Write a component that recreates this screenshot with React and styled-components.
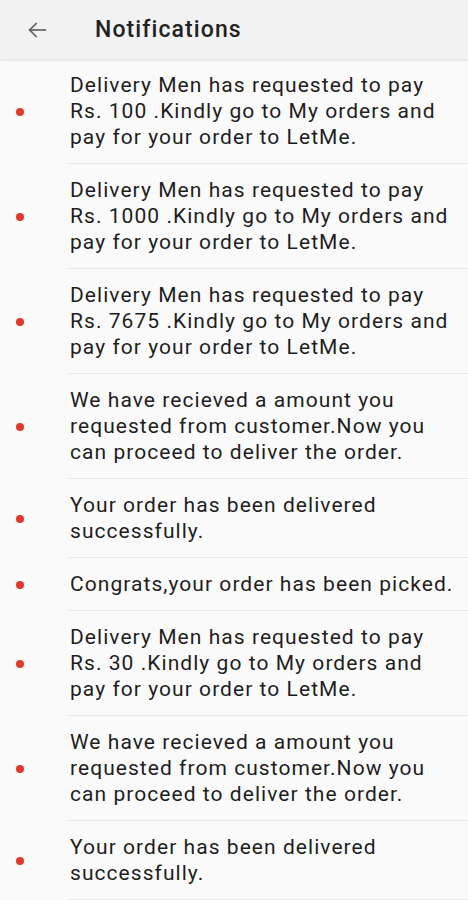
import styled, { createGlobalStyle } from "styled-components";

const GlobalStyle = createGlobalStyle`
  body {
    margin: 0;
    background: #fafafa;
    font-family: Roboto, "Noto Sans", sans-serif;
  }
`;

const Page = styled.div`
  width: 468px;
  min-height: 900px;
  background: #fafafa;
`;

const Header = styled.header`
  display: flex;
  align-items: center;
  height: 59px;
  background: #f2f2f2;
  box-shadow: 0 1px 3px rgba(0, 0, 0, 0.12);
  position: relative;
`;

const BackButton = styled.button`
  display: flex;
  align-items: center;
  justify-content: center;
  width: 76px;
  height: 59px;
  padding: 0 3px 0 0;
  border: none;
  background: none;
  color: #5f5f5f;
  box-sizing: border-box;
`;

const Title = styled.h1`
  margin: 0 0 0 19px;
  font-size: 23px;
  font-weight: 500;
  color: #222;
  letter-spacing: 1.1px;
`;

const List = styled.ul`
  list-style: none;
  margin: 0;
  padding: 0;
`;

const Item = styled.li`
  display: flex;
  align-items: center;
`;

const DotCell = styled.div`
  width: 68px;
  flex-shrink: 0;
  display: flex;
  padding-left: 16px;
  box-sizing: border-box;
`;

const Dot = styled.span`
  width: 8px;
  height: 8px;
  border-radius: 50%;
  background: #e0392b;
`;

const Body = styled.div`
  flex: 1;
  padding: 13px 10px 13px 2px;
  border-bottom: 1px solid #e8e8e8;
  font-size: 21px;
  line-height: 26px;
  letter-spacing: 1.05px;
  color: #1e1e1e;
`;

const notifications = [
  "Delivery Men has requested to pay Rs. 100 .Kindly go to My orders and pay for your order to LetMe.",
  "Delivery Men has requested to pay Rs. 1000 .Kindly go to My orders and pay for your order to LetMe.",
  "Delivery Men has requested to pay Rs. 7675 .Kindly go to My orders and pay for your order to LetMe.",
  "We have recieved a amount you requested from customer.Now you can proceed to deliver the order.",
  "Your order has been delivered successfully.",
  "Congrats,your order has been picked.",
  "Delivery Men has requested to pay Rs. 30 .Kindly go to My orders and pay for your order to LetMe.",
  "We have recieved a amount you requested from customer.Now you can proceed to deliver the order.",
  "Your order has been delivered successfully.",
];

export default function App() {
  return (
    <Page>
      <GlobalStyle />
      <Header>
        <BackButton aria-label="Back">
          <svg width="22" height="22" viewBox="0 0 24 24" fill="none" stroke="currentColor" strokeWidth="1.8" strokeLinecap="square">
            <path d="M21 12H4" />
            <path d="M11 5l-7 7 7 7" />
          </svg>
        </BackButton>
        <Title>Notifications</Title>
      </Header>
      <List>
        {notifications.map((text, i) => (
          <Item key={i}>
            <DotCell>
              <Dot />
            </DotCell>
            <Body>{text}</Body>
          </Item>
        ))}
      </List>
    </Page>
  );
}
